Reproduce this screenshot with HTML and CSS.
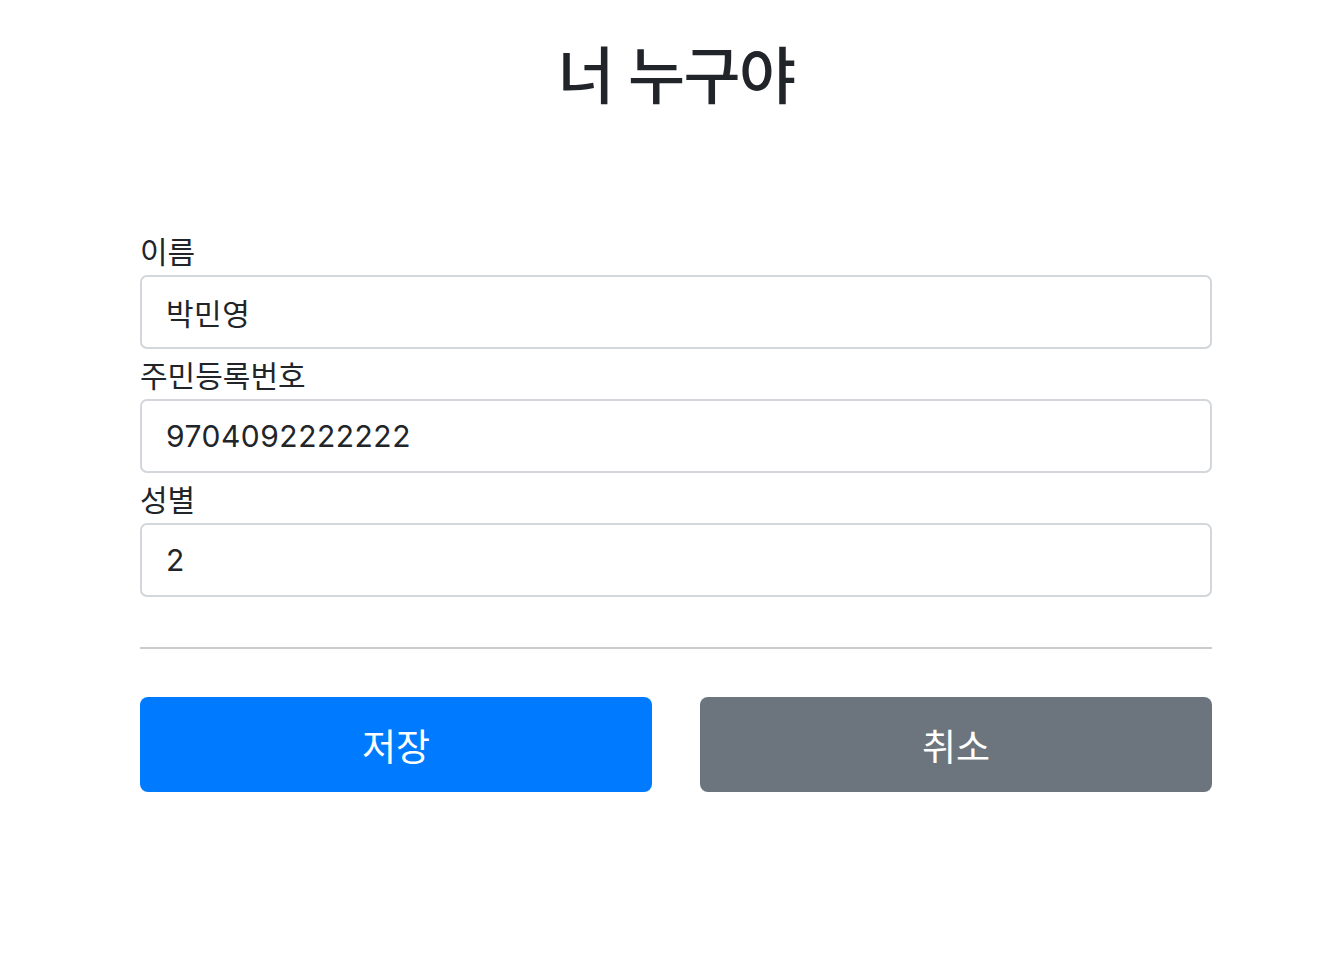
FILE: index.html
```html
<!DOCTYPE html>
<html lang="ko">
<head>
  <meta charset="UTF-8">
  <meta name="viewport" content="width=device-width, initial-scale=1.0">
  <title>너 누구야</title>
  <link rel="stylesheet" href="styles.css">
</head>
<body>
  <div class="container">
    <h1 class="title">너 누구야</h1>

    <form class="person-form">
      <label for="name">이름</label>
      <input type="text" id="name" class="form-control" value="박민영">

      <label for="rrn">주민등록번호</label>
      <input type="text" id="rrn" class="form-control" value="9704092222222">

      <label for="gender">성별</label>
      <input type="text" id="gender" class="form-control" value="2">

      <hr>

      <div class="buttons">
        <button type="button" class="btn btn-primary">저장</button>
        <button type="button" class="btn btn-secondary">취소</button>
      </div>
    </form>
  </div>
</body>
</html>
```

FILE: styles.css
```css
* {
  margin: 0;
  padding: 0;
  box-sizing: border-box;
}

body {
  background: #ffffff;
  color: #212529;
  font-family: Inter, "Noto Sans CJK KR", sans-serif;
}

.container {
  width: 1072px;
  margin-left: 140px;
}

.title {
  margin-top: 40px;
  margin-bottom: 115px;
  font-size: 62px;
  font-weight: 500;
  line-height: 74px;
  text-align: center;
  letter-spacing: -1.5px;
}

.person-form label {
  display: block;
  margin-top: 4px;
  font-size: 30px;
  line-height: 46px;
}

.form-control {
  display: block;
  width: 100%;
  height: 74px;
  padding: 0 24px;
  font-family: inherit;
  font-size: 30px;
  letter-spacing: 0.5px;
  color: #212529;
  background: #ffffff;
  border: 2px solid #d3d6da;
  border-radius: 7px;
  outline: none;
}

hr {
  margin: 50px 0 48px;
  border: none;
  border-top: 2px solid #cccccc;
}

.buttons {
  display: grid;
  grid-template-columns: 1fr 1fr;
  gap: 48px;
}

.btn {
  height: 95px;
  font-family: inherit;
  font-size: 37px;
  color: #ffffff;
  border: none;
  border-radius: 8px;
  cursor: pointer;
}

.btn-primary {
  background-color: #007bff;
}

.btn-secondary {
  background-color: #6c757d;
}
```
